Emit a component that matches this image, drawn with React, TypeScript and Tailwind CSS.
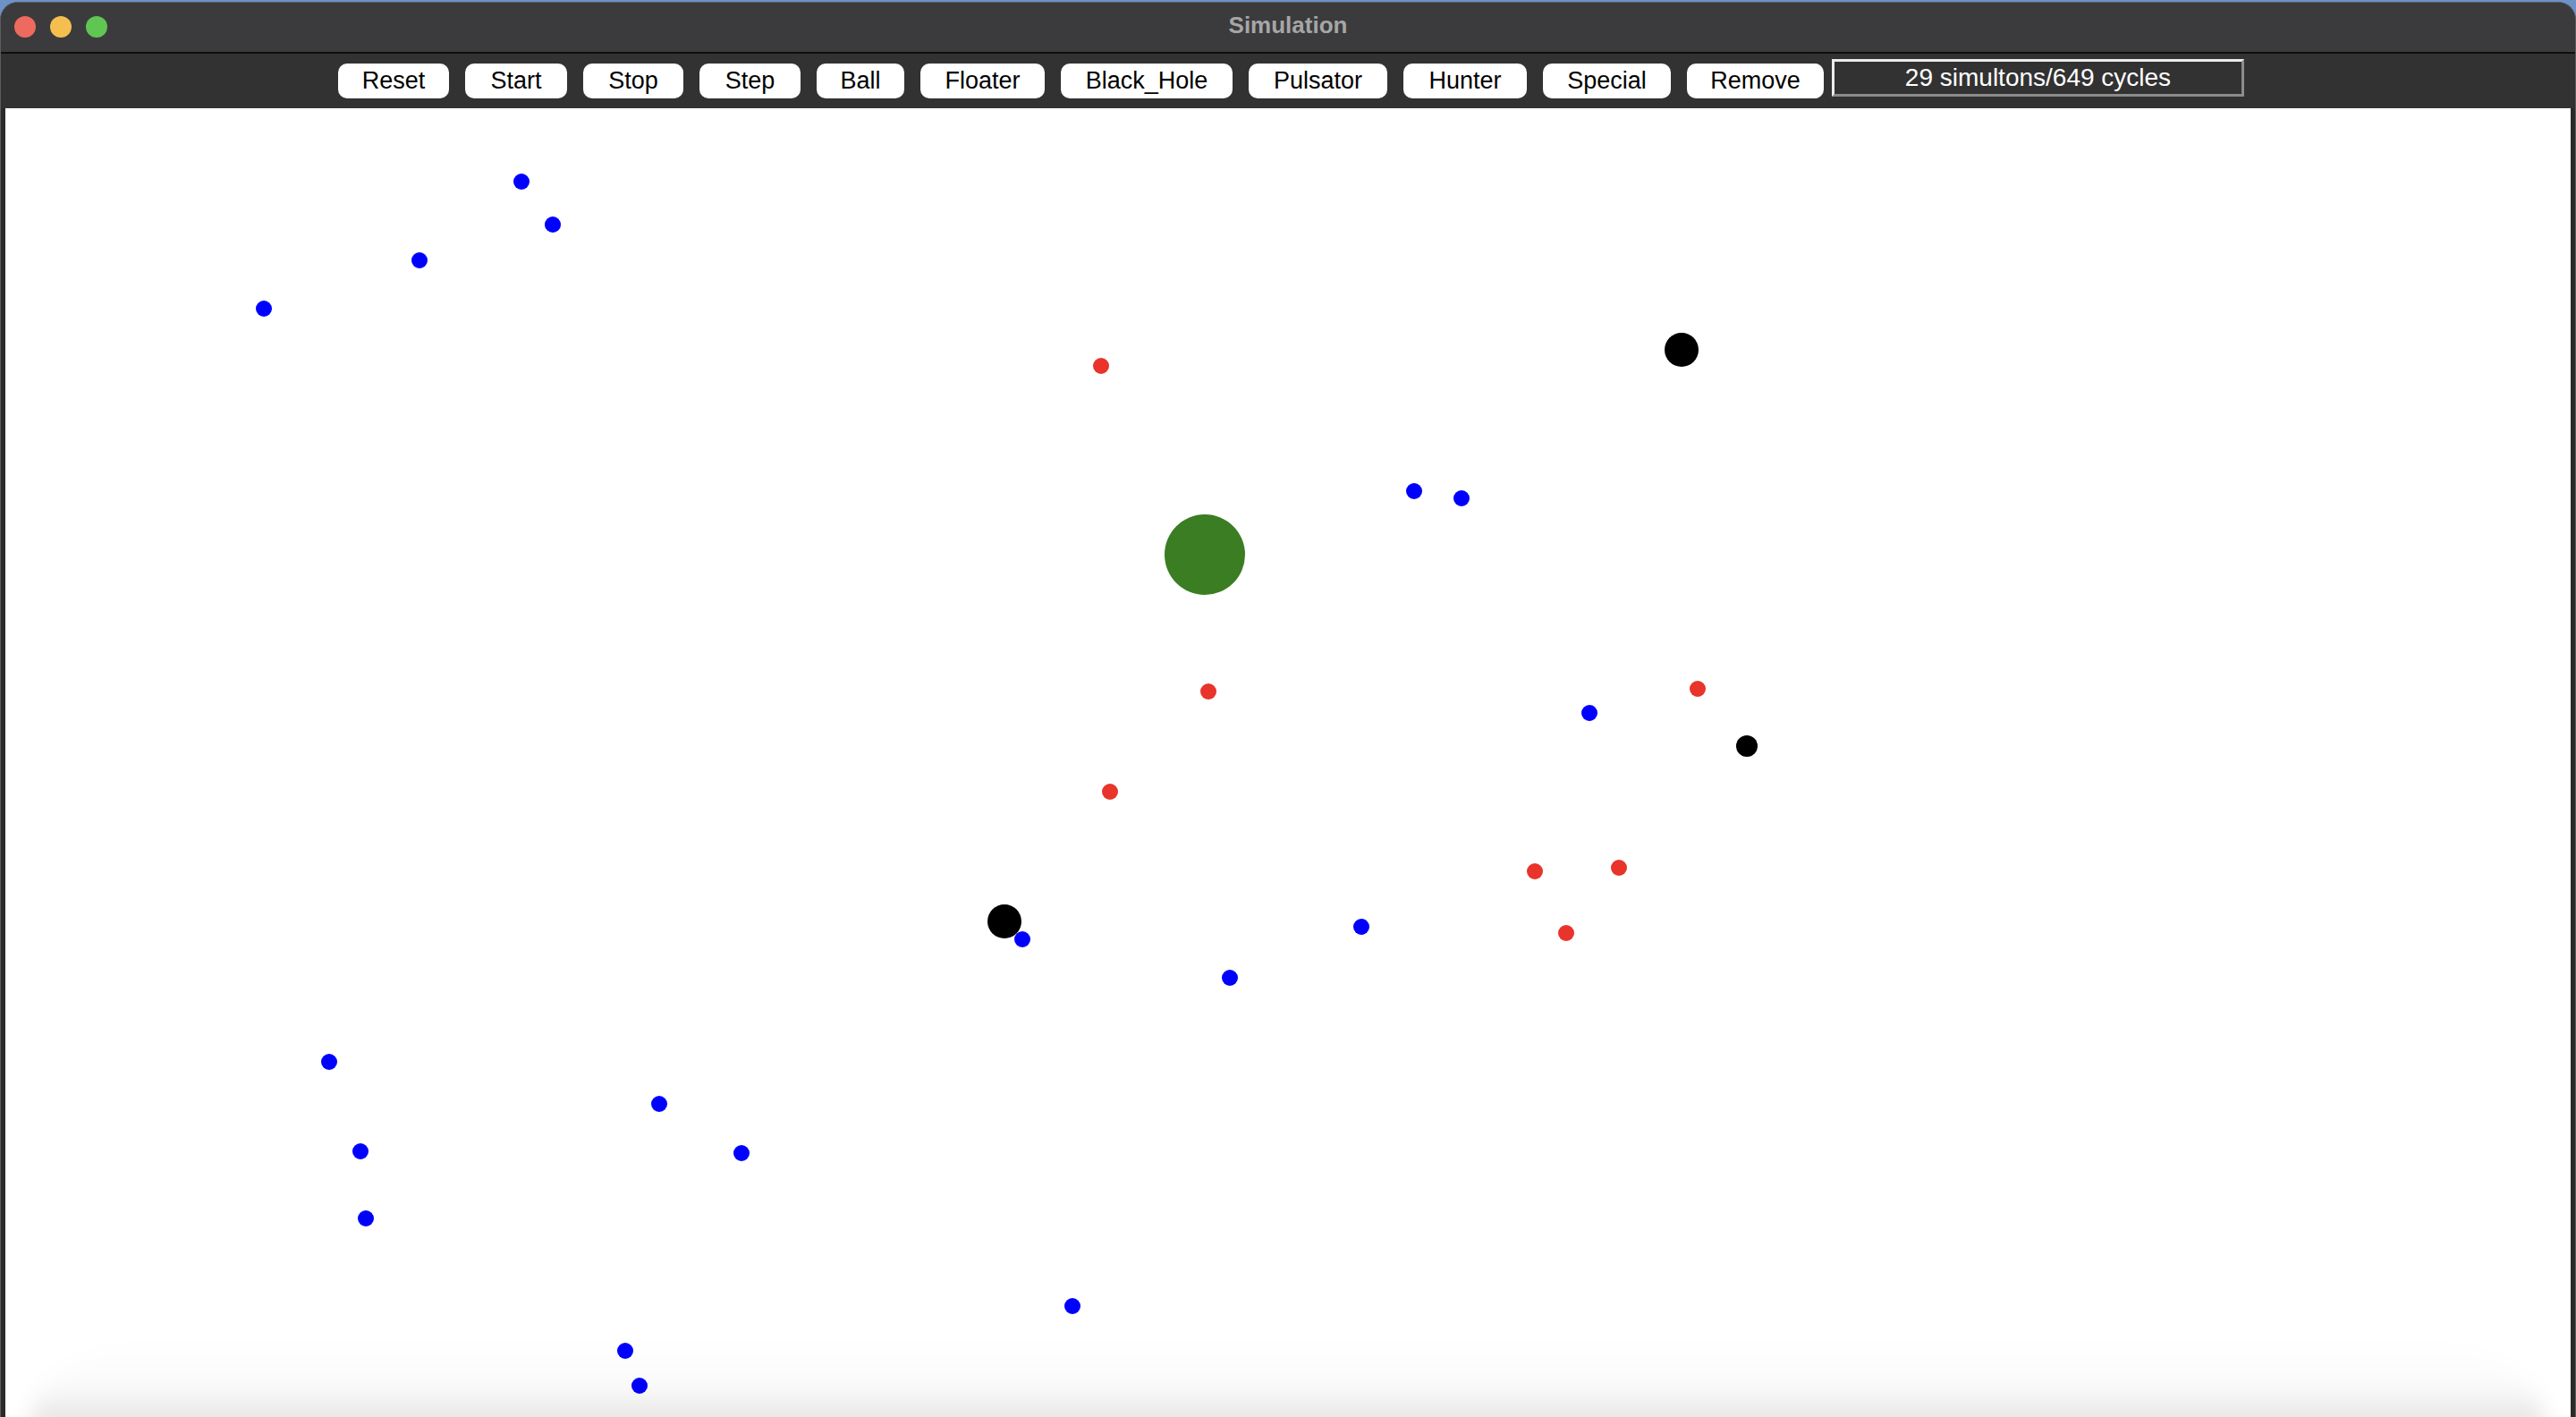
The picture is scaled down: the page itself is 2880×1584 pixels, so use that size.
import React from 'react'

type Dot = { x: number; y: number; d: number; color: string }

const BLUE = '#0000ff'
const RED = '#e8342a'

// centre points measured on the full page; canvas starts at (6, 120)
const dots: Dot[] = [
  { x: 583, y: 202, d: 18, color: BLUE },
  { x: 618, y: 250, d: 18, color: BLUE },
  { x: 469, y: 290, d: 18, color: BLUE },
  { x: 295, y: 344, d: 18, color: BLUE },
  { x: 1581, y: 548, d: 18, color: BLUE },
  { x: 1634, y: 556, d: 18, color: BLUE },
  { x: 1777, y: 796, d: 18, color: BLUE },
  { x: 1143, y: 1049, d: 18, color: BLUE },
  { x: 1522, y: 1035, d: 18, color: BLUE },
  { x: 1375, y: 1092, d: 18, color: BLUE },
  { x: 368, y: 1186, d: 18, color: BLUE },
  { x: 737, y: 1233, d: 18, color: BLUE },
  { x: 403, y: 1286, d: 18, color: BLUE },
  { x: 829, y: 1288, d: 18, color: BLUE },
  { x: 409, y: 1361, d: 18, color: BLUE },
  { x: 1199, y: 1459, d: 18, color: BLUE },
  { x: 699, y: 1509, d: 18, color: BLUE },
  { x: 715, y: 1548, d: 18, color: BLUE },
  { x: 1231, y: 408, d: 18, color: RED },
  { x: 1351, y: 772, d: 18, color: RED },
  { x: 1898, y: 769, d: 18, color: RED },
  { x: 1241, y: 884, d: 18, color: RED },
  { x: 1716, y: 973, d: 18, color: RED },
  { x: 1810, y: 969, d: 18, color: RED },
  { x: 1751, y: 1042, d: 18, color: RED },
  { x: 1880, y: 390, d: 38, color: '#000000' },
  { x: 1953, y: 833, d: 24, color: '#000000' },
  { x: 1123, y: 1029, d: 38, color: '#000000' },
  { x: 1347, y: 619, d: 90, color: '#3a7d23' },
]

const CANVAS_X = 6
const CANVAS_Y = 120

const buttons = [
  { label: 'Reset', w: 'w-[124px]' },
  { label: 'Start', w: 'w-[114px]' },
  { label: 'Stop', w: 'w-[112px]' },
  { label: 'Step', w: 'w-[113px]' },
  { label: 'Ball', w: 'w-[98px]' },
  { label: 'Floater', w: 'w-[139px]' },
  { label: 'Black_Hole', w: 'w-[192px]' },
  { label: 'Pulsator', w: 'w-[155px]' },
  { label: 'Hunter', w: 'w-[138px]' },
  { label: 'Special', w: 'w-[143px]' },
  { label: 'Remove', w: 'w-[153px]' },
]

export default function App() {
  return (
    <div className="w-[2880px] h-[1584px] bg-[#6b93c8] overflow-hidden font-['Liberation_Sans',Arial,sans-serif]">
      <div className="mt-[2px] h-[1582px] rounded-t-[20px] bg-[#2a2a2a] border-x border-t border-[#5c5c5e] flex flex-col overflow-hidden">
        {/* title bar */}
        <div className="relative h-[55px] bg-[#3b3b3d] flex items-center justify-center shrink-0">
          <div className="absolute left-[15px] top-[15px] flex gap-[16px]">
            <span className="w-[24px] h-[24px] rounded-full bg-[#ee6a5e]"></span>
            <span className="w-[24px] h-[24px] rounded-full bg-[#f5bf4f]"></span>
            <span className="w-[24px] h-[24px] rounded-full bg-[#61c554]"></span>
          </div>
          <span className="text-[26px] font-bold text-[#a6a6a7] leading-none -mt-[5px]">Simulation</span>
        </div>
        <div className="h-[2px] bg-[#0f0f0f] shrink-0"></div>

        {/* toolbar */}
        <div className="h-[61px] bg-[#323232] flex items-start pl-[377px] gap-[9px] shrink-0">
          <div className="flex gap-[18px] mt-[11px]">
            {buttons.map((b) => (
              <button
                key={b.label}
                className={`${b.w} h-[39px] rounded-[10px] bg-white text-black text-[27px] leading-none flex items-center justify-center`}
              >
                {b.label}
              </button>
            ))}
          </div>
          <div className="mt-[6px] w-[461px] h-[42px] border-[3px] border-t-[#ececec] border-l-[#ececec] border-b-[#8c8c8c] border-r-[#8c8c8c] flex items-center justify-center text-white text-[28px] leading-none">
            29 simultons/649 cycles
          </div>
        </div>

        {/* canvas */}
        <div className="relative flex-1 mx-[5px] bg-white overflow-hidden">
          {dots.map((p, i) => (
            <span
              key={i}
              className="absolute rounded-full"
              style={{
                left: p.x - CANVAS_X - p.d / 2,
                top: p.y - CANVAS_Y - p.d / 2,
                width: p.d,
                height: p.d,
                background: p.color,
              }}
            ></span>
          ))}
          <div className="absolute left-[30px] right-[30px] bottom-[-24px] h-[110px] rounded-tl-[160px_90px] rounded-tr-[160px_90px] bg-gradient-to-b from-black/0 via-black/[0.02] to-black/[0.15] blur-[12px]"></div>
        </div>
      </div>
    </div>
  )
}
